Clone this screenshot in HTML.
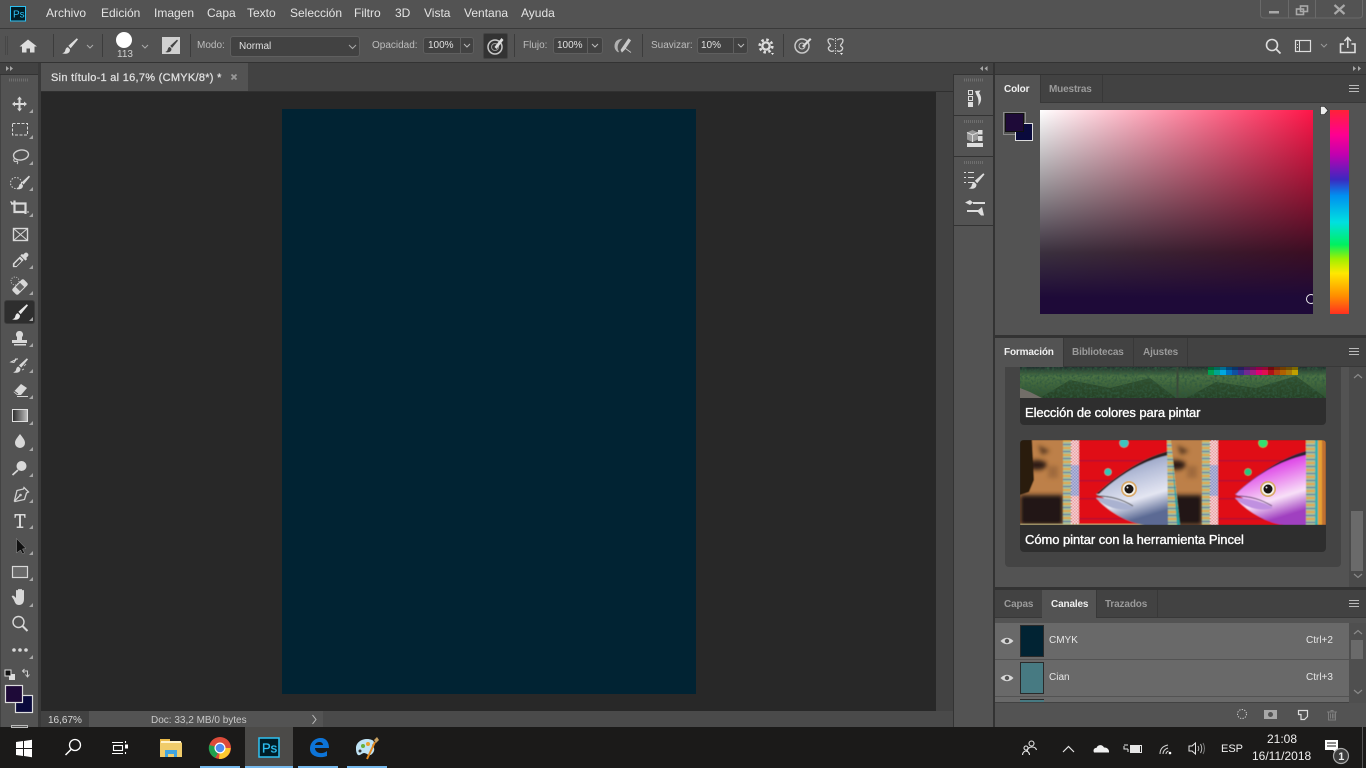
<!DOCTYPE html>
<html lang="es"><head><meta charset="utf-8"><title>Photoshop</title>
<style>
html,body{margin:0;padding:0;width:1366px;height:768px;overflow:hidden;background:#535353;font-family:"Liberation Sans",sans-serif;color:#d6d6d6}
.b{position:absolute}
.t{position:absolute;white-space:nowrap;line-height:14px;font-size:10px;color:#cfcfcf}
.m{font-size:12px;color:#e4e4e4;top:6px}
.tab{font-size:10px;font-weight:bold;color:#9a9a9a;top:0;letter-spacing:-.15px}
.on{color:#f0f0f0}
svg{position:absolute;left:0;top:0}
</style></head><body>
<!-- chrome areas -->
<div class="b" style="left:0;top:0;width:1366px;height:28px;background:#535353"></div>
<div class="b" style="left:0;top:28px;width:1366px;height:1px;background:#3a3a3a"></div>
<div class="b" style="left:0;top:62px;width:1366px;height:1px;background:#333"></div>
<div class="b" style="left:0;top:63px;width:38px;height:12px;background:#424242"></div>
<div class="b" style="left:0;top:74px;width:38px;height:1px;background:#333"></div>
<div class="b" style="left:1px;top:75px;width:37px;height:652px;background:#535353"></div>
<div class="b" style="left:0;top:75px;width:1px;height:652px;background:#424242"></div>
<div class="b" style="left:38px;top:63px;width:3px;height:664px;background:#3a3a3a"></div>
<div class="b" style="left:41px;top:63px;width:912px;height:29px;background:#424242"></div>
<div class="b" style="left:41px;top:63px;width:207px;height:28px;background:#535353"></div>
<div class="b" style="left:41px;top:91px;width:912px;height:1px;background:#303030"></div>
<div class="b" style="left:41px;top:92px;width:895px;height:619px;background:#282828"></div>
<div class="b" style="left:936px;top:92px;width:17px;height:619px;background:#424242"></div>
<div class="b" style="left:282px;top:109px;width:414px;height:585px;background:#012333"></div>
<!-- status bar -->
<div class="b" style="left:41px;top:711px;width:912px;height:16px;background:#4a4a4a"></div>
<div class="b" style="left:41px;top:711px;width:48px;height:16px;background:#424242"></div>
<div class="b" style="left:89px;top:711px;width:234px;height:16px;background:#535353"></div>
<!-- dock -->
<div class="b" style="left:953px;top:63px;width:413px;height:12px;background:#424242"></div>
<div class="b" style="left:953px;top:74px;width:413px;height:1px;background:#333"></div>
<div class="b" style="left:953px;top:75px;width:1px;height:652px;background:#333"></div>
<div class="b" style="left:954px;top:75px;width:39px;height:652px;background:#535353"></div>
<div class="b" style="left:993px;top:63px;width:2px;height:664px;background:#333"></div>
<div class="b" style="left:954px;top:115px;width:39px;height:1px;background:#333"></div>
<div class="b" style="left:954px;top:156px;width:39px;height:1px;background:#333"></div>
<div class="b" style="left:954px;top:225px;width:39px;height:1px;background:#333"></div>
<!-- panel color -->
<div class="b" style="left:995px;top:75px;width:371px;height:260px;background:#535353"></div>
<div class="b" style="left:995px;top:75px;width:371px;height:27px;background:#424242"></div>
<div class="b" style="left:995px;top:75px;width:45px;height:28px;background:#535353"></div>
<div class="b" style="left:1102px;top:75px;width:1px;height:27px;background:#383838"></div>
<div class="b" style="left:1040px;top:75px;width:1px;height:27px;background:#383838"></div>
<div class="b" style="left:1040px;top:102px;width:326px;height:1px;background:#383838"></div>
<div class="b" style="left:1040px;top:110px;width:273px;height:204px;background:linear-gradient(to bottom,rgba(24,14,24,0),rgba(24,14,24,.5) 42%,rgba(24,12,28,.85) 70%,#1e0a38 92%),linear-gradient(to right,#fff,#ff1548)"></div>
<div class="b" style="left:1330px;top:110px;width:19px;height:204px;background:linear-gradient(to bottom,#ff2238,#ff0090 12%,#c000b0 22%,#3c28c0 34%,#0090f0 42%,#00e0e0 55%,#00f060 66%,#a0f000 73%,#ffe800 80%,#ff9000 91%,#ff3020)"></div>
<div class="b" style="left:995px;top:335px;width:371px;height:3px;background:#333"></div>
<!-- panel formacion -->
<div class="b" style="left:995px;top:338px;width:371px;height:249px;background:#535353"></div>
<div class="b" style="left:995px;top:338px;width:371px;height:28px;background:#424242"></div>
<div class="b" style="left:995px;top:338px;width:68px;height:29px;background:#535353"></div>
<div class="b" style="left:1063px;top:338px;width:1px;height:28px;background:#383838"></div>
<div class="b" style="left:1133px;top:338px;width:1px;height:28px;background:#383838"></div>
<div class="b" style="left:1187px;top:338px;width:1px;height:28px;background:#383838"></div>
<div class="b" style="left:1063px;top:366px;width:303px;height:1px;background:#383838"></div>
<div class="b" style="left:1005px;top:367px;width:336px;height:200px;background:#444;border-radius:0 0 4px 4px"></div>
<div class="b" style="left:1020px;top:367px;width:306px;height:58px;background:#2e2e2e;border-radius:0 0 4px 4px"></div>
<div class="b" style="left:1020px;top:440px;width:306px;height:112px;background:#2e2e2e;border-radius:4px"></div>
<div class="b" style="left:1349px;top:367px;width:17px;height:220px;background:#4a4a4a"></div>
<div class="b" style="left:1351px;top:511px;width:12px;height:60px;background:#6a6a6a"></div>
<div class="b" style="left:995px;top:587px;width:371px;height:3px;background:#333"></div>
<!-- panel canales -->
<div class="b" style="left:995px;top:590px;width:371px;height:137px;background:#535353"></div>
<div class="b" style="left:995px;top:590px;width:371px;height:27px;background:#424242"></div>
<div class="b" style="left:1042px;top:590px;width:54px;height:28px;background:#535353"></div>
<div class="b" style="left:1096px;top:590px;width:1px;height:27px;background:#383838"></div>
<div class="b" style="left:1157px;top:590px;width:1px;height:27px;background:#383838"></div>
<div class="b" style="left:995px;top:617px;width:47px;height:1px;background:#383838"></div>
<div class="b" style="left:1096px;top:617px;width:270px;height:1px;background:#383838"></div>
<div class="b" style="left:995px;top:623px;width:354px;height:36px;background:#696969"></div>
<div class="b" style="left:995px;top:660px;width:354px;height:36px;background:#696969"></div>
<div class="b" style="left:995px;top:697px;width:354px;height:5px;background:#696969"></div>
<div class="b" style="left:995px;top:702px;width:371px;height:1px;background:#424242"></div>
<div class="b" style="left:1349px;top:623px;width:17px;height:80px;background:#4f4f4f"></div>
<div class="b" style="left:1351px;top:640px;width:12px;height:19px;background:#6a6a6a"></div>
<div class="b" style="left:1020px;top:625px;width:24px;height:32px;background:#012333;box-sizing:border-box;border:1px solid #2a2a2a"></div>
<div class="b" style="left:1020px;top:662px;width:24px;height:32px;background:#477a82;box-sizing:border-box;border:1px solid #2a2a2a"></div>
<div class="b" style="left:1020px;top:699px;width:24px;height:3px;background:#477a82;border-top:1px solid #2a2a2a;box-sizing:border-box"></div>
<!-- taskbar -->
<div class="b" style="left:0;top:727px;width:1366px;height:41px;background:#1b1a19"></div>
<div class="b" style="left:245px;top:727px;width:48px;height:41px;background:#4b4a48"></div>
<div class="b" style="left:200px;top:766px;width:40px;height:2px;background:#76b9ed"></div>
<div class="b" style="left:245px;top:766px;width:48px;height:2px;background:#76b9ed"></div>
<div class="b" style="left:298px;top:766px;width:40px;height:2px;background:#76b9ed"></div>
<div class="b" style="left:347px;top:766px;width:40px;height:2px;background:#76b9ed"></div>
<!-- active tool -->
<div class="b" style="left:4px;top:300px;width:31px;height:24px;background:#2e2e2e;border-radius:3px;box-sizing:border-box;border:1px solid #3d3d3d"></div>
<!-- option fields -->
<div class="b" style="left:230px;top:36px;width:130px;height:21px;background:#424242;border:1px solid #5f5f5f;border-radius:3px;box-sizing:border-box"></div>
<div class="b" style="left:423px;top:37px;width:51px;height:17px;background:#424242;border:1px solid #5f5f5f;border-radius:3px;box-sizing:border-box"></div>
<div class="b" style="left:553px;top:37px;width:50px;height:17px;background:#424242;border:1px solid #5f5f5f;border-radius:3px;box-sizing:border-box"></div>
<div class="b" style="left:697px;top:37px;width:51px;height:17px;background:#424242;border:1px solid #5f5f5f;border-radius:3px;box-sizing:border-box"></div>
<div class="b" style="left:483px;top:33px;width:25px;height:26px;background:#333;border:1px solid #444;border-radius:2px;box-sizing:border-box"></div>

<svg width="1366" height="768" viewBox="0 0 1366 768">
<defs>
<symbol id="br" viewBox="0 0 16 16"><path d="M14.800.2 6.400 7.800l2.300 2.500L16 1.400zM6 9.200C3.600 9.400 3.600 11.800 3 13.200 2.500 14.500 1.200 14.800.2 15.400 3.600 16.400 8.400 15.600 7.900 11.200z"/></symbol>
<symbol id="bx" viewBox="0 0 5 5"><path d="M5 0V5H0z"/></symbol>
<filter id="soft" x="-5%" y="-5%" width="110%" height="110%"><feGaussianBlur stdDeviation=".6"/></filter>
<filter id="soft2" x="-20%" y="-20%" width="140%" height="140%"><feGaussianBlur stdDeviation="2"/></filter>
<filter id="nz"><feTurbulence type="fractalNoise" baseFrequency=".4" numOctaves="2" seed="4"/><feColorMatrix values="0 0 0 0 .03  0 0 0 0 .1  0 0 0 0 .05  2.400 0 0 0 -.95"/></filter>
<linearGradient id="fishg" x1="0" y1="0" x2=".3" y2="1"><stop offset="0" stop-color="#6878a4"/><stop offset=".45" stop-color="#b8c0da"/><stop offset=".75" stop-color="#e4e6f2"/><stop offset="1" stop-color="#5b6a94"/></linearGradient>
<linearGradient id="fishp" x1="0" y1="0" x2=".3" y2="1"><stop offset="0" stop-color="#b030c0"/><stop offset=".35" stop-color="#e050e8"/><stop offset=".75" stop-color="#f8e0f8"/><stop offset="1" stop-color="#a040c0"/></linearGradient>
<linearGradient id="hill" x1="0" y1="0" x2="0" y2="1"><stop offset="0" stop-color="#1e2f2e"/><stop offset=".3" stop-color="#4c7444"/><stop offset="1" stop-color="#2f5030"/></linearGradient>
<pattern id="chk" width="3" height="3" patternUnits="userSpaceOnUse"><rect width="3" height="3" fill="#fff"/><rect width="1.500" height="1.500" fill="#e01030"/><rect x="1.500" y="1.500" width="1.500" height="1.500" fill="#e01030"/></pattern>
<pattern id="chb" width="3" height="3" patternUnits="userSpaceOnUse"><rect width="3" height="3" fill="#dde"/><rect width="1.500" height="1.500" fill="#3050b0"/><rect x="1.500" y="1.500" width="1.500" height="1.500" fill="#3050b0"/></pattern>
<pattern id="stp" width="5" height="7" patternUnits="userSpaceOnUse"><rect width="5" height="7" fill="#a8c098"/><rect width="5" height="2" fill="#e0a848"/><rect y="4" width="5" height="1" fill="#5070a8"/></pattern>
<g id="half">
 <rect x="0" y="0" width="43" height="85" fill="#bd8048"/>
 <g filter="url(#soft2)"><rect x="0" y="55" width="43" height="30" fill="#241814"/><ellipse cx="17" cy="25" rx="10" ry="5" fill="#2e1c12"/><path d="M18 5l12 6-8 4z" fill="#5a3a20"/><rect x="28" y="26" width="10" height="12" fill="#a06a3c"/></g>
 <rect x="43" y="0" width="8" height="85" fill="url(#stp)"/>
 <rect x="51" y="0" width="8" height="85" fill="url(#chk)"/>
 <rect x="51" y="25" width="8" height="31" fill="url(#chb)"/>
 <rect x="59" y="0" width="89" height="85" fill="#e00f14"/>
 <g fill="#b80c30"><rect x="59" y="20" width="89" height="1.500"/><rect x="59" y="40" width="89" height="1.500"/><rect x="59" y="58" width="89" height="1.500"/><rect x="59" y="78" width="89" height="1.500"/></g>
</g>
</defs>

<!-- PS logo menu -->
<rect x="10.500" y="6.500" width="15" height="14.500" fill="#001d26" stroke="#2ec1f3"/>
<text x="13" y="17.500" font-size="10" fill="#2ec1f3" font-family="Liberation Sans">Ps</text>
<!-- window controls -->
<g fill="none" stroke="#6a6a6a"><path d="M1260.500 0V14.500q0 3.500 3.500 3.500H1359q3.500 0 3.500-3.500V0M1288.500 0V18M1315.500 0V18"/></g>
<rect x="1269" y="11" width="10" height="2.500" fill="#a8a8a8"/>
<g fill="none" stroke="#a8a8a8" stroke-width="1.600"><rect x="1296.500" y="9" width="7" height="5.500"/><rect x="1300.500" y="6" width="7" height="5.500"/></g>
<path d="M1334.500 5l10 9M1344.500 5l-10 9" stroke="#a8a8a8" stroke-width="2.200"/>
<!-- options bar gripper and separators -->
<g stroke="#474747"><path d="M5.500 36V55M7.500 36V55"/></g>
<g stroke="#3c3c3c"><path d="M53.500 34V57M102.500 34V57M190.500 34V57M514.500 34V57M642.500 34V57M783.500 34V57"/></g>
<path d="M28 39.500l-8.500 7h2.500v6h4.500v-4h3.500v4h4.500v-6h2.500z" fill="#ddd"/>
<use href="#br" x="62" y="38" width="16" height="16" fill="#ddd"/>
<g fill="none" stroke="#aaa"><path d="M87 45l3 3 3-3M142 45l3 3 3-3M349 45l3.500 3.500 3.500-3.500"/></g>
<circle cx="124" cy="40" r="8" fill="#fff"/>
<rect x="162" y="37" width="18" height="17" fill="#d0d0d0"/>
<use href="#br" x="165" y="39" width="13" height="14" fill="#444"/>
<g stroke="#5f5f5f"><path d="M460.500 37V54M587.500 37V54M733.500 37V54"/></g>
<path d="M464 44l3 3 3-3M592 44l3 3 3-3M738 44l3 3 3-3" fill="none" stroke="#bbb"/>
<!-- airbrush icons -->
<circle cx="495" cy="47" r="7" fill="none" stroke="#c8c8c8" stroke-width="1.500"/><circle cx="495" cy="47" r="3.500" fill="none" stroke="#999"/><path d="M494.500 47l7-9 2 2-7 9z" fill="#ddd"/>
<path d="M621 39.500c-7 1-8 9-2.500 12.500-2.500-4-1.500-9 2.500-12.500z" fill="#b0b0b0" stroke="#b0b0b0"/><path d="M621 50l7.500-11 2 1.500-6 9-2.500 2.500zM625.500 48.500l5.500 4" fill="#c8c8c8" stroke="#c8c8c8" stroke-width=".8"/>
<circle cx="766" cy="46" r="4.800" fill="#ddd"/><circle cx="766" cy="46" r="6.300" fill="none" stroke="#ddd" stroke-width="2.600" stroke-dasharray="2.500 2.450"/><circle cx="766" cy="46" r="2.500" fill="#535353"/>
<path d="M771 53h3l-1.500 2z" fill="#eee"/>
<circle cx="802" cy="46" r="7" fill="none" stroke="#c8c8c8" stroke-width="1.500"/><circle cx="802" cy="46" r="3" fill="none" stroke="#c8c8c8"/><path d="M802 46l8-8 1.500 1.500-8 8z" fill="#ddd"/>
<path d="M834 40c-3-2-6-1.500-6 .5 0 3 2.500 3.500 2.500 5s-3 1-2 3.500 4 3 5.500 1.500M837 40c3-2 6-1.500 6 .5 0 3-2.500 3.500-2.500 5s3 1 2 3.500-4 3-5.500 1.500" fill="none" stroke="#d0d0d0" stroke-width="1.300"/><path d="M835.500 38V54" stroke="#ddd" stroke-dasharray="1 1.500"/><path d="M840 53h3l-1.500 2z" fill="#eee"/>
<!-- right top icons -->
<circle cx="1272" cy="45" r="5.500" fill="none" stroke="#ddd" stroke-width="1.600"/><path d="M1276 49l4.500 4.500" stroke="#ddd" stroke-width="1.800"/>
<rect x="1295.500" y="40.500" width="15" height="11" fill="none" stroke="#ddd" stroke-width="1.200"/><path d="M1299.500 41v10" stroke="#ddd"/><path d="M1297 44.500h1M1297 47.500h1" stroke="#ddd"/>
<path d="M1321 44l3 3 3-3" fill="none" stroke="#999"/>
<path d="M1344 44h-3.500v8.500h14.500V44h-3.500" fill="none" stroke="#ddd" stroke-width="1.600"/><path d="M1347.750 48V38.500M1344.500 41l3.250-3.500 3.250 3.500" fill="none" stroke="#ddd" stroke-width="1.600"/>
<!-- collapse arrows -->
<g fill="#a8a8a8"><path d="M6 66l3 2.500-3 2.500zM10 66l3 2.500-3 2.500zM1353 66l3 2.500-3 2.500zM1358 66l3 2.500-3 2.500zM983 66l-3 2.500 3 2.500zM987.500 66l-3 2.500 3 2.500z"/></g>
<!-- close tab x -->
<path d="M231.500 74.500l5 5M236.500 74.500l-5 5" stroke="#999" stroke-width="1.800"/>
<path d="M9 80h20" stroke="#6e6e6e" stroke-width="3" stroke-dasharray="1 1"/>
<path d="M964 80h20M964 121.500h20M964 162.500h20" stroke="#6e6e6e" stroke-width="3" stroke-dasharray="1 1"/>

<!-- TOOLS -->
<path d="M19.500 96.500l2.500 3h-1.500v3.500h3.500v-1.500l3 2.500-3 2.500v-1.500h-3.500v3.500h1.500l-2.500 3-2.500-3h1.500v-3.500h-3.500v1.500l-3-2.500 3-2.500v1.500h3.500v-3.500h-1.500z" fill="#d8d8d8"/>
<rect x="12.500" y="123.500" width="15" height="11.500" fill="none" stroke="#d8d8d8" stroke-dasharray="3 1.500"/>
<ellipse cx="21" cy="155" rx="7.500" ry="5" fill="none" stroke="#d0d0d0" stroke-width="1.400" transform="rotate(-8 21 155)"/><path d="M15 158c-3 2 0 5 2 3 1 1 1 2 0 3" fill="none" stroke="#d0d0d0"/>
<circle cx="16" cy="183" r="5.500" fill="none" stroke="#d8d8d8" stroke-dasharray="1.500 1.500"/><use href="#br" x="16" y="175" width="14" height="15" fill="#d8d8d8"/>
<path d="M14.500 200.500v11.500h11V207M11 203.500h14.500V214" fill="none" stroke="#d8d8d8" stroke-width="2.200"/><path d="M10 202h2M27 212h2" stroke="#d8d8d8"/>
<g fill="none" stroke="#d8d8d8"><rect x="13.500" y="228.500" width="14" height="12" stroke-width="1.400"/><path d="M13.500 228.500l14 12M27.500 228.500l-14 12"/></g>
<path d="M25 253c2-1 4 1 3 3l-2 2 1 1-1.500 1.500-5-5 1.500-1.500 1 1zM20 256.500l3.500 3.500-7 7h-3.500v-3.500z" fill="#d8d8d8" stroke="#d8d8d8" stroke-width=".3"/><path d="M19.500 259l2 2-5 5h-2v-2z" fill="#535353"/>
<g transform="rotate(-45 20 287)"><rect x="12" y="283" width="16" height="8" rx="2" fill="#d8d8d8"/><rect x="17" y="284" width="6" height="6" fill="#666"/></g><circle cx="15" cy="281" r="4" fill="none" stroke="#ccc" stroke-dasharray="1 1.500"/>
<use href="#br" x="12" y="304" width="16" height="16" fill="#e8e8e8"/>
<path d="M19.500 331a3.500 3.500 0 0 1 2.500 6v3h5v3H12v-3h5v-3a3.500 3.500 0 0 1 2.500-6zM14 344h12v1.500H14z" fill="#d8d8d8"/>
<use href="#br" x="13" y="358" width="15" height="15" fill="#d8d8d8"/><path d="M11 362l5-2.500-2 3zM18 359h-3" fill="none" stroke="#d8d8d8"/><path d="M26 364l-2 2M24 369l-2 1" stroke="#bbb"/>
<path d="M21 384l6 4-6 7h-4l-3.500-3z" fill="#d8d8d8"/><path d="M17 396.500H28" stroke="#d8d8d8"/><path d="M14 391l4 3" stroke="#535353"/>
<defs><linearGradient id="gg"><stop offset="0" stop-color="#2a2a2a"/><stop offset="1" stop-color="#c0c0c0"/></linearGradient></defs>
<rect x="12.500" y="409.500" width="15" height="12" fill="url(#gg)" stroke="#e0e0e0"/>
<path d="M20 434c3 4 5 6 5 9a5 5 0 0 1-10 0c0-3 2-5 5-9z" fill="#d8d8d8"/>
<circle cx="21.500" cy="466" r="5" fill="#d8d8d8"/><path d="M18 470l-5.500 5" stroke="#d8d8d8" stroke-width="1.800"/>
<path d="M24 487.500l4.500 4.500-2 1-2 6.500-9.500 2-.5-1 2.500-10 6.500-1.500zM14 501.500l6-6" fill="none" stroke="#d0d0d0" stroke-width="1.300"/><circle cx="20.500" cy="495" r="1.300" fill="#d0d0d0"/>
<path d="M14.500 514h11v4h-1l-.7-2.500H21v11h2.300v1.500h-6.600V526.500H19v-11h-2.800l-.7 2.500h-1z" fill="#d8d8d8"/>
<path d="M16.500 538.500l9.500 10-3.500.5 2 4-2 1-2-4-4 3z" fill="#111" stroke="#999" stroke-width=".5"/>
<rect x="12.500" y="566.500" width="15" height="11" fill="#6a6a6a" stroke="#d8d8d8" stroke-width="1.200"/>
<path d="M14 600l-2-3c-1-1 1-2 2-1l2 2v-7c0-1.500 2-1.500 2 0v-1c0-1.500 2-1.500 2 0v0c0-1.500 2-1.500 2 0v1c0-1.500 2-1.500 2 0v8c0 4-2 6-5 6-3 0-4-2-5-5z" fill="#d8d8d8"/>
<circle cx="18.500" cy="622" r="5.500" fill="none" stroke="#d8d8d8" stroke-width="1.400"/><path d="M22.500 626l5 5" stroke="#d8d8d8" stroke-width="2"/>
<g fill="#d8d8d8"><circle cx="14" cy="650" r="1.800"/><circle cx="20" cy="650" r="1.800"/><circle cx="26" cy="650" r="1.800"/></g>
<rect x="9" y="674" width="6" height="6" fill="#ddd"/><rect x="5" y="670" width="6" height="6" fill="#111" stroke="#ddd"/>
<path d="M23 671h4.500v5.500M25.500 674.500l2 2.500 2-2.500M24.500 669l-2 2 2 2" fill="none" stroke="#ccc"/>
<rect x="15.500" y="695.500" width="17" height="17" fill="#0a0a3c" stroke="#ddd" stroke-width="1.200"/>
<rect x="5.500" y="685.500" width="17" height="17" fill="#1e0a38" stroke="#ddd" stroke-width="1.200"/>
<rect x="11.500" y="725.500" width="16" height="2" fill="none" stroke="#bbb"/>
<g fill="#a6a6a6">
<use href="#bx" x="29" y="109" width="4" height="4"/><use href="#bx" x="29" y="135" width="4" height="4"/><use href="#bx" x="29" y="161" width="4" height="4"/><use href="#bx" x="29" y="187" width="4" height="4"/><use href="#bx" x="29" y="213" width="4" height="4"/><use href="#bx" x="29" y="265" width="4" height="4"/><use href="#bx" x="29" y="291" width="4" height="4"/><use href="#bx" x="29" y="317" width="4" height="4"/><use href="#bx" x="29" y="343" width="4" height="4"/><use href="#bx" x="29" y="369" width="4" height="4"/><use href="#bx" x="29" y="395" width="4" height="4"/><use href="#bx" x="29" y="421" width="4" height="4"/><use href="#bx" x="29" y="447" width="4" height="4"/><use href="#bx" x="29" y="473" width="4" height="4"/><use href="#bx" x="29" y="499" width="4" height="4"/><use href="#bx" x="29" y="525" width="4" height="4"/><use href="#bx" x="29" y="551" width="4" height="4"/><use href="#bx" x="29" y="577" width="4" height="4"/><use href="#bx" x="29" y="603" width="4" height="4"/><use href="#bx" x="29" y="655" width="4" height="4"/></g>

<!-- dock icons -->
<g fill="none" stroke="#ddd"><rect x="968.500" y="90.500" width="4" height="4"/><rect x="968.500" y="96.500" width="4" height="4"/></g><rect x="968" y="102" width="5" height="5" fill="#ddd"/>
<path d="M975 91l5.500-.5-1.500 2.500c3 3.500 3 9-1 13 1-4 .5-8-1.500-11z" fill="#ddd"/>
<path d="M972.500 130l5.500 2.500v7l-5.500 2.500-5.500-2.500v-7z" fill="#999"/><path d="M967 132.500l5.500 2.500 5.500-2.500M972.500 135v7" stroke="#ddd" fill="none"/><rect x="978" y="130" width="4.500" height="4.500" fill="#ddd"/><rect x="978" y="136" width="4.500" height="5" fill="#ddd"/><rect x="967" y="143" width="16" height="4" fill="#ddd"/>
<g stroke="#ddd"><path d="M964 172.500h2M968 172.500h6M964 177.500h2M968 177.500h6M964 182.500h2M968 182.500h6"/></g><use href="#br" x="968" y="173" width="17" height="16" fill="#ddd"/>
<path d="M965 202.500l5-2.500 3 2.500-3 2.500zM973 202h12v2h-12zM967 210h11v2h-11zM977 211l5-4 2 8.500h-3z" fill="#ddd"/>

<!-- hamburgers -->
<g stroke="#bbb"><path d="M1349 85.500h10M1349 88.500h10M1349 91.500h10M1349 348.500h10M1349 351.500h10M1349 354.500h10M1349 600.500h10M1349 603.500h10M1349 606.500h10"/></g>
<!-- color swatches -->
<rect x="1003.500" y="112.500" width="22" height="22" fill="none" stroke="#8a8a8a"/>
<rect x="1015.500" y="123.500" width="17" height="17" fill="#0a0a3c" stroke="#ddd"/>
<rect x="1005.500" y="113.500" width="18" height="18" fill="#1e0a38" stroke="#111"/>
<path d="M1320.500 106.500h4l3.500 4-3.500 4h-4z" fill="#eee" stroke="#222" stroke-width=".6"/>
<clipPath id="cc"><rect x="1040" y="110" width="273" height="204"/></clipPath>
<circle cx="1311" cy="299" r="4.500" fill="none" stroke="#eee" clip-path="url(#cc)"/>

<!-- Mountain -->
<clipPath id="mc"><rect x="1020" y="367" width="306" height="31"/></clipPath>
<g clip-path="url(#mc)">
<rect x="1020" y="367" width="306" height="31" fill="url(#hill)"/>
<path d="M1040 398l30-18 40 8 40-10 26 20zM1186 398l30-16 40 6 40-12 30 22z" fill="#20381f" opacity=".6"/>
<rect x="1020" y="367" width="306" height="31" filter="url(#nz)"/>
<path d="M1020 388l10 4 12 6h-22z" fill="#726e68"/>
<rect x="1176.500" y="367" width="2" height="31" fill="#3a4a3a"/>
<rect x="1208" y="367" width="6" height="8" fill="#00a050"/><rect x="1214" y="367" width="6" height="8" fill="#00a590"/><rect x="1220" y="367" width="6" height="8" fill="#00a8e0"/><rect x="1226" y="367" width="6" height="8" fill="#0070c0"/><rect x="1232" y="367" width="6" height="8" fill="#1050a0"/><rect x="1238" y="367" width="6" height="8" fill="#3a3090"/><rect x="1244" y="367" width="6" height="8" fill="#702a90"/><rect x="1250" y="367" width="6" height="8" fill="#a01a80"/><rect x="1256" y="367" width="6" height="8" fill="#e00070"/><rect x="1262" y="367" width="6" height="8" fill="#e01050"/><rect x="1268" y="367" width="6" height="8" fill="#b01018"/><rect x="1274" y="367" width="6" height="8" fill="#b04010"/><rect x="1280" y="367" width="6" height="8" fill="#b06000"/><rect x="1286" y="367" width="6" height="8" fill="#a87a08"/><rect x="1292" y="367" width="6" height="8" fill="#c0a000"/>
<rect x="1208" y="367" width="90" height="3" fill="#000" opacity=".35"/>
</g>
<!-- Fish -->
<clipPath id="fc"><path d="M1020 525V444q0-4 4-4h298q4 0 4 4v81z"/></clipPath>
<g clip-path="url(#fc)"><g filter="url(#soft)">
<use href="#half" transform="translate(1159 440)"/>
<use href="#half" transform="translate(1020 440)"/>
<path d="M1020 440h12l2 40-5 12-9 3z" fill="#2a1a0e"/>
<rect x="1020" y="524" width="145" height="1" fill="#c8b880"/>
<circle cx="1124" cy="443" r="4.500" fill="#3cc4c0"/><circle cx="1108" cy="472" r="3.500" fill="#30c8b8"/>
<circle cx="1263" cy="443" r="4.500" fill="#30e070"/><circle cx="1248" cy="472" r="3.500" fill="#20c880"/>
<path d="M1096 494c20-18 45-36 73-43v74h-24c-18-2-36-14-46-24l5-3z" fill="url(#fishg)"/>
<path d="M1096 494c20-18 45-36 73-43v4c-28 6-52 22-70 39z" fill="#2e2422"/>
<path d="M1096 498c14 0 30 4 38 10-12 4-28 0-38-10z" fill="#aab2d0"/><path d="M1097 496q20 0 36 10" stroke="#444" fill="none"/>
<path d="M1235 494c20-18 45-36 71-43v74h-22c-18-2-36-14-46-24l5-3z" fill="url(#fishp)"/>
<path d="M1235 494c20-18 45-36 71-43v4c-28 6-52 22-70 39z" fill="#2e2030"/>
<path d="M1235 498c14 0 30 4 38 10-12 4-28 0-38-10z" fill="#c090e0"/><path d="M1236 496q20 0 36 10" stroke="#604070" fill="none"/>
<path d="M1167 440h4l9 85h-12z" fill="url(#stp)"/><path d="M1172 460l8 65h-3z" fill="#20a0a0"/>
<rect x="1306" y="440" width="9" height="85" fill="url(#stp)"/><rect x="1315" y="440" width="3" height="85" fill="#30b0b0"/><rect x="1318" y="440" width="4" height="85" fill="#e8a030"/><rect x="1322" y="440" width="4" height="85" fill="#c07030"/>
</g>
<circle cx="1129" cy="489" r="8" fill="#d8a868"/><circle cx="1129" cy="489" r="6.300" fill="#f2f0e8"/><circle cx="1129" cy="489" r="4.500" fill="#1a1414"/><circle cx="1127.500" cy="487.500" r="1" fill="#ddd"/>
<circle cx="1268" cy="489" r="8" fill="#d8a868"/><circle cx="1268" cy="489" r="6.300" fill="#f2f0e8"/><circle cx="1268" cy="489" r="4.500" fill="#1a1414"/><circle cx="1266.500" cy="487.500" r="1" fill="#ddd"/>
</g>
<!-- scroll arrows -->
<path d="M1354 378l4-3.500 4 3.500M1354 574l4 3.500 4-3.500M1354 634l4-3.500 4 3.500M1354 690l4 3.500 4-3.500" fill="none" stroke="#8a8a8a" stroke-width="1.200"/>
<path d="M312.500 715l3.500 4.500-3.500 4.500" fill="none" stroke="#bbb"/>
<!-- eyes -->
<path d="M1000.500 641q6.500-6.500 13 0-6.500 6.500-13 0zM1000.500 678q6.500-6.500 13 0-6.500 6.500-13 0z" fill="#d8d8d8"/><circle cx="1007" cy="641" r="2.200" fill="#555"/><circle cx="1007" cy="678" r="2.200" fill="#555"/>
<!-- channels footer -->
<circle cx="1242" cy="714" r="4.500" fill="none" stroke="#ccc" stroke-dasharray="1.300 1.300"/>
<rect x="1264" y="710" width="13" height="9" fill="#a8a8a8"/><circle cx="1270.500" cy="714.500" r="2.500" fill="#535353"/>
<path d="M1298.500 710.500h9v6l-3 3h-3.500v-5h-2.500z" fill="none" stroke="#ddd" stroke-width="1.200"/>
<path d="M1327 712h10M1331 712v-1.500h2v1.500M1328.500 712v8h7v-8M1330.500 713.500v5M1332.500 713.500v5M1334 713.500v5" fill="none" stroke="#7e7e7e"/>

<!-- TASKBAR ICONS -->
<path d="M16 742l7-1v7h-7zM24 741l8-1.300V748h-8zM16 749h7v7l-7-1zM24 749h8v8.300l-8-1.300z" fill="#fff"/>
<circle cx="75" cy="745" r="5.500" fill="none" stroke="#fff" stroke-width="1.300"/><path d="M71 749.500l-5.500 5.500" stroke="#fff" stroke-width="1.500"/>
<g fill="none" stroke="#fff" stroke-width="1.100"><rect x="113.500" y="745.500" width="9" height="5"/><path d="M112 742.500h11M112 753.500h11M125.500 741v2M125.500 752v2"/></g><rect x="125" y="744.500" width="3" height="4" fill="#fff"/>
<path d="M160 740.500h9l2 2h11v14.500h-22z" fill="#f0cc6a"/><rect x="160" y="739" width="10" height="3" fill="#e9b949"/><rect x="161" y="741" width="20" height="2" fill="#fff2c8"/><path d="M165 750h12v7h-3v-3h-6v3h-3z" fill="#41a5e0"/><rect x="168" y="754" width="6" height="3" fill="#f0cc6a"/>
<circle cx="220" cy="748" r="11" fill="#dd4b3a"/><path d="M209.200 745a11 11 0 0 0 6 12.900L221 748z" fill="#21a04f"/><path d="M220 748h10.600a11 11 0 0 1-11.600 11z" fill="#fdc92e"/><circle cx="220" cy="748" r="5.500" fill="#fff"/><circle cx="220" cy="748" r="4.300" fill="#4f8bef"/>
<rect x="259" y="738" width="20" height="19" fill="#001d26" stroke="#2ec1f3" stroke-width="1.500"/>
<text x="262" y="752.500" font-size="13" fill="#2ec1f3" font-family="Liberation Sans" stroke="#2ec1f3" stroke-width=".3">Ps</text>
<path d="M310 749c0-7 5-11 11-11 5 0 8 4 8 10h-14c0 5 7 7 12 3v5c-8 3-17 0-17-7zm5-4h8c0-4-7-4-8 0z" fill="#0d74d8"/>
<path d="M356 748c0-7 9-11 16-8 3 1 2 4 0 5 3 3 3 6 0 9-3 3-5-1-8-1-2 0-4 3-6 2-2-2-2-5-2-7z" fill="#bfe3f5"/><circle cx="363" cy="746" r="2" fill="#68b03c"/><circle cx="368" cy="744" r="2" fill="#e8a030"/><circle cx="360" cy="751" r="1.500" fill="#333"/><path d="M367 759l8-17" stroke="#e48a20" stroke-width="2"/><path d="M374 740l3-3 2 3-3 3z" fill="#c8a060"/>
<!-- tray -->
<g fill="none" stroke="#e6e6e6" stroke-width="1.100" transform="translate(-2 0)"><circle cx="1033.500" cy="743.500" r="2.500"/><path d="M1029 752c0-3 2-5 5-5 2 0 4 1 4.500 3"/><circle cx="1028" cy="748" r="2"/><path d="M1024.500 755c0-2 1.500-4 3.500-4s3.500 2 3.500 4"/></g>
<path d="M1063 752l5.500-5.500 5.500 5.500" fill="none" stroke="#e6e6e6" stroke-width="1.200"/>
<path d="M1094 752.500c-1.500-3 1-5 2.500-4.500 1-3.500 6-4 7.500-.5 3-.3 5.500 2 5 5z" fill="#f0f0f0"/>
<g fill="none" stroke="#e6e6e6"><rect x="1130.500" y="745.500" width="11" height="7"/><path d="M1124 746v3h4M1128 749v3M1125 744v2M1127 744v2"/></g><rect x="1131" y="746" width="9" height="6" fill="#e6e6e6"/>
<g fill="none" stroke="#d6d6d6"><path d="M1160 754c0-5 3-8 8-9M1163 754c0-3 2-5 5-6M1166 754c0-1.500 1-2.500 2.500-3"/></g><circle cx="1170" cy="753" r="1.300" fill="#fff"/>
<path d="M1189 746h3l3.500-3v11l-3.500-3h-3z" fill="none" stroke="#e6e6e6"/><path d="M1198 746q1.500 2.500 0 5M1200.500 744q2.500 4.500 0 9" fill="none" stroke="#bbb"/><path d="M1203 743q3 5.500 0 11" fill="none" stroke="#777"/>
<path d="M1325 740h13v10h-2v3l-3-3h-8z" fill="#fff"/><path d="M1327 743h9M1327 746h9" stroke="#1b1a19"/>
<circle cx="1341" cy="756" r="7.500" fill="#3d3d3d" stroke="#aaa" stroke-width="1.200"/>
<text x="1338.200" y="760" font-size="11" font-weight="bold" fill="#eee" font-family="Liberation Sans">1</text>
<path d="M1362.500 727v41" stroke="#555"/>
</svg>

<!-- menu -->
<div class="t m" style="left:46px">Archivo</div>
<div class="t m" style="left:101px">Edición</div>
<div class="t m" style="left:154px">Imagen</div>
<div class="t m" style="left:207px">Capa</div>
<div class="t m" style="left:247px">Texto</div>
<div class="t m" style="left:290px">Selección</div>
<div class="t m" style="left:354px">Filtro</div>
<div class="t m" style="left:395px">3D</div>
<div class="t m" style="left:424px">Vista</div>
<div class="t m" style="left:464px">Ventana</div>
<div class="t m" style="left:521px">Ayuda</div>
<!-- options -->
<div class="t" style="left:117px;top:48px">113</div>
<div class="t" style="left:197px;top:39px;color:#bdbdbd">Modo:</div>
<div class="t" style="left:239px;top:40px;color:#e0e0e0">Normal</div>
<div class="t" style="left:372px;top:39px;color:#bdbdbd">Opacidad:</div>
<div class="t" style="left:428px;top:39px;color:#e0e0e0">100%</div>
<div class="t" style="left:523px;top:39px;color:#bdbdbd">Flujo:</div>
<div class="t" style="left:557px;top:39px;color:#e0e0e0">100%</div>
<div class="t" style="left:651px;top:39px;color:#bdbdbd">Suavizar:</div>
<div class="t" style="left:701px;top:39px;color:#e0e0e0">10%</div>
<!-- title -->
<div class="t" style="left:51px;top:71px;font-size:11px;color:#e0e0e0;letter-spacing:.28px;-webkit-text-stroke:.25px #e0e0e0">Sin título-1 al 16,7% (CMYK/8*) *</div>
<!-- status -->
<div class="t" style="left:48px;top:714px;color:#d8d8d8">16,67%</div>
<div class="t" style="left:151px;top:714px;color:#c8c8c8">Doc: 33,2 MB/0 bytes</div>
<!-- panels tabs -->
<div class="t tab on" style="left:1004px;top:83px">Color</div>
<div class="t tab" style="left:1049px;top:83px">Muestras</div>
<div class="t tab on" style="left:1004px;top:346px">Formación</div>
<div class="t tab" style="left:1072px;top:346px">Bibliotecas</div>
<div class="t tab" style="left:1143px;top:346px">Ajustes</div>
<div class="t tab" style="left:1004px;top:598px">Capas</div>
<div class="t tab on" style="left:1051px;top:598px">Canales</div>
<div class="t tab" style="left:1105px;top:598px">Trazados</div>
<!-- cards -->
<div class="t" style="left:1025px;top:405px;font-size:13px;line-height:15px;color:#fff;letter-spacing:-.1px;-webkit-text-stroke:.35px #fff">Elección de colores para pintar</div>
<div class="t" style="left:1025px;top:532px;font-size:13px;line-height:15px;color:#fff;letter-spacing:-.06px;-webkit-text-stroke:.35px #fff">Cómo pintar con la herramienta Pincel</div>
<!-- channels -->
<div class="t" style="left:1049px;top:634px;color:#e6e6e6">CMYK</div>
<div class="t" style="left:1306px;top:634px;color:#e6e6e6">Ctrl+2</div>
<div class="t" style="left:1049px;top:671px;color:#e6e6e6">Cian</div>
<div class="t" style="left:1306px;top:671px;color:#e6e6e6">Ctrl+3</div>
<!-- tray -->
<div class="t" style="left:1221px;top:742px;color:#f0f0f0;font-size:11px">ESP</div>
<div class="t" style="left:1267px;top:732px;color:#f0f0f0;font-size:12px">21:08</div>
<div class="t" style="left:1252px;top:749px;color:#f0f0f0;font-size:12px">16/11/2018</div>
</body></html>
